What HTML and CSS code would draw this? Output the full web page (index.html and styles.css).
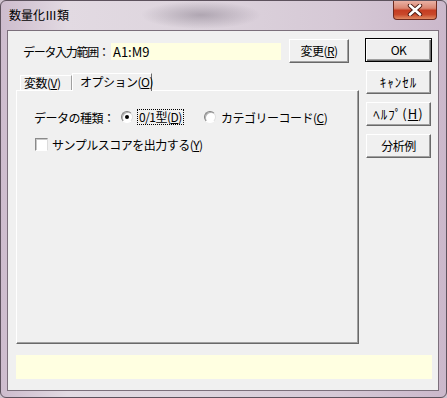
FILE: index.html
```html
<!DOCTYPE html>
<html lang="ja">
<head>
    <meta charset="UTF-8">
    <title>数量化Ⅲ類</title>
    <link rel="stylesheet" href="styles.css">
</head>
<body>
    <div class="window">
        <div class="titlebar">
            <span class="title">数量化Ⅲ類</span>
            <div class="close">
                <svg width="16" height="12" viewBox="0 0 16 12">
                    <path d="M3 1.5 L13 10.5 M13 1.5 L3 10.5" stroke="#4a1a12" stroke-width="4.4" stroke-linecap="round"/>
                    <path d="M3 1.5 L13 10.5 M13 1.5 L3 10.5" stroke="#ffffff" stroke-width="2.6" stroke-linecap="round"/>
                </svg>
            </div>
        </div>

        <div class="client">
            <div class="top">
                <div class="main">
                    <div class="range-row">
                        <span class="range-label">データ入力範囲：</span>
                        <div class="field">A1:M9</div>
                        <button class="btn change">変更(<u>R</u>)</button>
                    </div>

                    <div class="tabs">
                        <div class="tab">変数(<u>V</u>)</div>
                        <div class="tab active">オプション(<u>O</u>)</div>
                    </div>

                    <div class="panel">
                        <div class="kind-row">
                            <span class="kind-label">データの種類：</span>
                            <label class="radio">
                                <span class="circle checked"></span>
                                <span class="focus">0/1型(<u>D</u>)</span>
                            </label>
                            <label class="radio second">
                                <span class="circle"></span>
                                <span class="radio-text">カテゴリーコード(<u>C</u>)</span>
                            </label>
                        </div>
                        <label class="check">
                            <span class="box"></span>
                            <span>サンプルスコアを出力する(<u>Y</u>)</span>
                        </label>
                    </div>
                </div>

                <div class="side">
                    <button class="btn default">OK</button>
                    <button class="btn kana">ｷｬﾝｾﾙ</button>
                    <button class="btn kana">ﾍﾙﾌﾟ(<u>H</u>)</button>
                    <button class="btn">分析例</button>
                </div>
            </div>

            <div class="status"></div>
        </div>
    </div>
</body>
</html>
```

FILE: styles.css
```css
* {
    box-sizing: border-box;
}

body {
    margin: 0;
    font-family: "Noto Sans CJK JP", "DejaVu Sans", sans-serif;
    font-size: 12px;
    letter-spacing: -0.5px;
    color: #000;
    background: #cfc3cf;
}

.window {
    width: 447px;
    height: 398px;
    border: 1px solid #5d525d;
    border-radius: 6px;
    display: flex;
    flex-direction: column;
    overflow: hidden;
    background:
        radial-gradient(ellipse 60px 14px at 200px 14px, rgba(120, 110, 125, 0.45), rgba(120, 110, 125, 0) 100%),
        linear-gradient(to right, #cdbccd 0, #e2dae2 15%, #ddd4dd 45%, #d6c9d6 75%, #cbb8cb 100%);
}

/* title bar */
.titlebar {
    height: 29px;
    display: flex;
    justify-content: space-between;
    align-items: flex-start;
}

.title {
    padding-left: 8px;
    line-height: 28px;
    letter-spacing: 0;
}

.close {
    width: 44px;
    height: 19px;
    margin-right: 9px;
    border: 1px solid #6e2b20;
    border-top: none;
    border-radius: 0 0 4px 4px;
    background: linear-gradient(#eab1a4 0, #d98672 40%, #c53d22 52%, #c9482a 75%, #e08a63 100%);
    display: flex;
    justify-content: center;
    align-items: center;
}

/* client area */
.client {
    margin: 0 7px 6px 6px;
    height: 361px;
    border: 1px solid #7b6f7b;
    background: #f0f0f0;
    padding: 7px 6px 0 8px;
}

.top {
    display: flex;
    align-items: flex-start;
}

.main {
    width: 343px;
    padding-top: 1px;
}

.range-row {
    height: 24px;
    display: flex;
    align-items: center;
}

.range-label {
    flex: none;
    width: 95px;
    padding-left: 7px;
    letter-spacing: -1.3px;
    white-space: nowrap;
}

.field {
    width: 170px;
    height: 17px;
    background: #ffffe1;
    padding-left: 2px;
    line-height: 17px;
    font-size: 13px;
    letter-spacing: 0;
}

.btn {
    font-family: inherit;
    font-size: 12px;
    letter-spacing: -0.5px;
    color: #000;
    background: #f0f0f0;
    border: 1px solid;
    border-color: #ffffff #696969 #696969 #ffffff;
    box-shadow: inset -1px -1px 0 #a0a0a0;
    padding: 0;
    height: 24px;
    line-height: 20px;
}

.btn.kana {
    font-size: 13px;
    letter-spacing: 1px;
}

.change {
    width: 60px;
    margin-left: 8px;
}

/* tabs */
.tabs {
    margin-top: 10px;
    height: 17px;
    display: flex;
    align-items: flex-end;
}

.tab {
    height: 15px;
    line-height: 14px;
    border: 1px solid;
    border-color: #ffffff #a0a0a0 transparent #ffffff;
    border-bottom: none;
    white-space: nowrap;
}

.tab:first-child {
    margin-left: 4px;
    width: 52px;
    padding-left: 3px;
}

.tab.active {
    width: 80px;
    height: 18px;
    margin-bottom: -1px;
    padding-left: 7px;
    line-height: 16px;
    background: #f0f0f0;
    border-color: #ffffff #696969 transparent #ffffff;
    position: relative;
    z-index: 1;
}

.panel {
    height: 254px;
    border: 1px solid;
    border-color: #ffffff #696969 #696969 #ffffff;
    box-shadow: inset -1px -1px 0 #a0a0a0;
    padding: 16px 0 0 17px;
}

.kind-row {
    height: 20px;
    display: flex;
    align-items: center;
}

.kind-label {
    flex: none;
    width: 87px;
    white-space: nowrap;
}

.radio {
    display: flex;
    align-items: center;
}

.circle {
    flex: none;
    width: 12px;
    height: 12px;
    border-radius: 50%;
    border: 1px solid;
    border-color: #808080 #e0e0e0 #ffffff #808080;
    background: #ffffff;
    box-shadow: inset 1px 1px 0 #b4b4b4;
    display: flex;
    justify-content: center;
    align-items: center;
}

.circle.checked::after {
    content: "";
    width: 4px;
    height: 4px;
    border-radius: 50%;
    background: #000;
}

.focus {
    margin-left: 4px;
    height: 16px;
    line-height: 14px;
    border: 1px dotted #000;
    padding: 0 1px;
    white-space: nowrap;
}

.radio.second {
    margin-left: 20px;
}

.radio-text {
    margin-left: 5px;
    white-space: nowrap;
}

.check {
    margin-top: 7px;
    margin-left: 1px;
    height: 20px;
    display: flex;
    align-items: center;
}

.box {
    flex: none;
    width: 13px;
    height: 13px;
    margin-right: 4px;
    border: 1px solid;
    border-color: #8a8a8a #dcdcdc #ffffff #8a8a8a;
    background: #ffffff;
    box-shadow: inset 1px 1px 0 #c8c8c8;
}

/* right buttons */
.side {
    width: 67px;
    margin-left: 6px;
    display: flex;
    flex-direction: column;
    gap: 8px;
}

.side .btn {
    margin: 0 1px;
}

.side .btn.default {
    margin: 0;
    border: 1px solid #000;
    box-shadow: inset 1px 1px 0 #ffffff, inset -1px -1px 0 #696969, inset -2px -2px 0 #a0a0a0;
}

.status {
    margin-top: 11px;
    width: 416px;
    height: 24px;
    background: #ffffe1;
}
```
